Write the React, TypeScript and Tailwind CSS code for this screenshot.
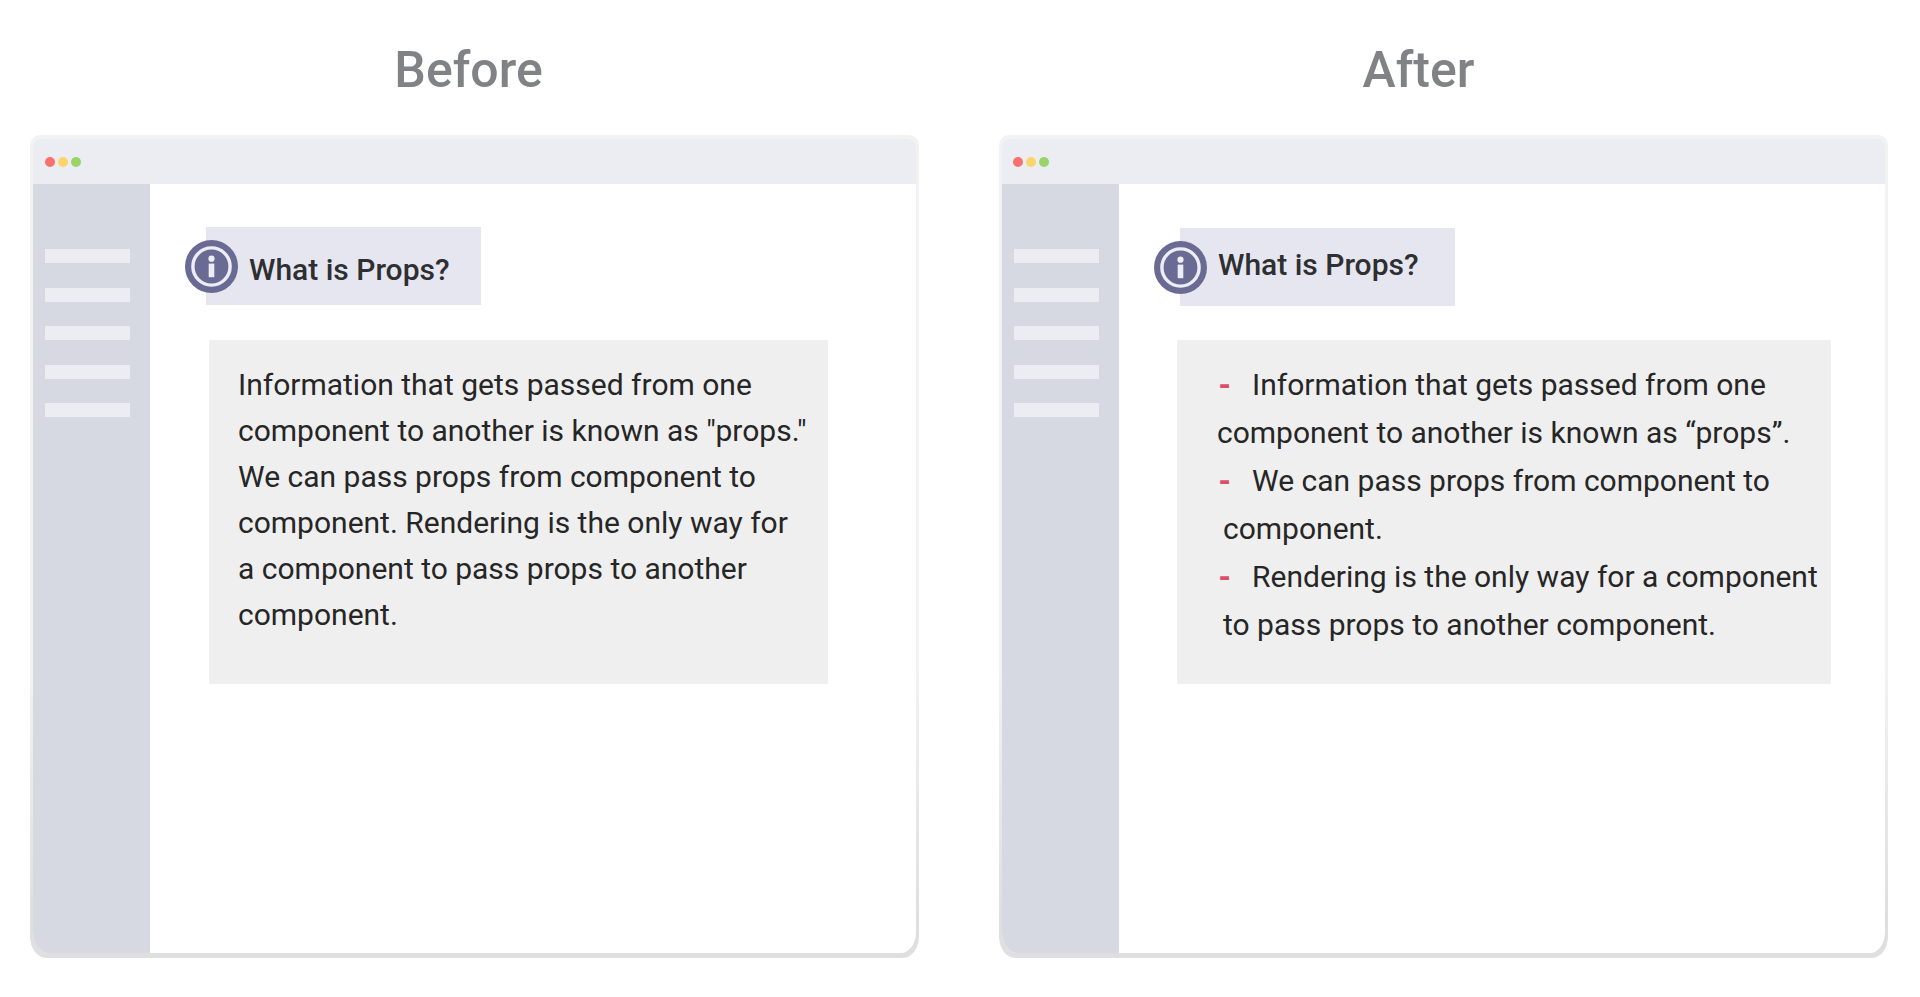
import type { ReactNode } from "react";
import clsx from "clsx";

function InfoIcon({ className }: { className?: string }) {
  return (
    <svg viewBox="0 0 53 53" className={clsx("size-[53px]", className)} aria-hidden="true">
      <circle cx="26.5" cy="26.5" r="26.5" fill="#6a6b95" />
      <circle cx="26.5" cy="26.5" r="18.6" fill="none" stroke="#ededf5" strokeWidth="3.4" />
      <circle cx="26.5" cy="18.7" r="3.1" fill="#ededf5" />
      <rect x="23.7" y="23.6" width="5.6" height="13.6" fill="#ededf5" />
    </svg>
  );
}

function Heading({ children, className }: { children: ReactNode; className: string }) {
  return (
    <h2 className={clsx("mb-[35px] text-center text-[50px] leading-[60px] font-medium text-[#808285]", className)}>
      {children}
    </h2>
  );
}

function BrowserWindow({ dotsClass, children }: { dotsClass: string; children: ReactNode }) {
  return (
    <div className="flex h-[823px] flex-col bg-linear-to-b from-[#f2f2f2] from-65% to-[#dfdfdf] to-95% px-[3px] pt-1 pb-[5px] [border-radius:10px_10px_16px_16px/10px_10px_22px_22px]">
      <div className="flex flex-1 flex-col overflow-hidden bg-white [border-radius:8px_8px_15px_15px/8px_8px_21px_21px]">
        <div className={clsx("flex h-[45px] items-center gap-[3px] bg-[#ecedf3]", dotsClass)}>
          <span className="size-[10px] rounded-full bg-[#f8716f]" />
          <span className="size-[10px] rounded-full bg-[#fbd56c]" />
          <span className="size-[10px] rounded-full bg-[#9ad467]" />
        </div>
        <div className="flex flex-1">
          <aside className="w-[117px] shrink-0 bg-[#d6d9e2] pt-[65px] pl-3">
            <div className="flex h-[168px] w-[85px] flex-col justify-between">
              <span className="h-[14px] bg-[#ecedf3]" />
              <span className="h-[14px] bg-[#ecedf3]" />
              <span className="h-[14px] bg-[#ecedf3]" />
              <span className="h-[14px] bg-[#ecedf3]" />
              <span className="h-[14px] bg-[#ecedf3]" />
            </div>
          </aside>
          <main className="flex-1 pt-[43px]">{children}</main>
        </div>
      </div>
    </div>
  );
}

function Dash() {
  return <span className="inline-block w-[35px] pl-px font-black text-[#d9506b]">-</span>;
}

export default function App() {
  return (
    <div className="grid min-h-screen grid-cols-2 gap-x-20 bg-white pt-10 pr-8 pb-[39px] pl-[30px] font-[Roboto,sans-serif] text-[#262626]">
      <section>
        <Heading className="pr-[12px]">Before</Heading>
        <BrowserWindow dotsClass="pl-[12px]">
          <div className="relative ml-[56px] h-[78px] w-[275px] bg-[#e6e6f0] pt-[26px] pl-[43px]">
            <InfoIcon className="absolute top-[13px] -left-[21px]" />
            <h3 className="text-[30px] leading-[34px] font-medium text-[#2e2f31]">What is Props?</h3>
          </div>
          <p className="mt-[35px] ml-[59px] h-[344px] w-[619px] bg-[#efefef] pt-[22px] pl-[29px] text-[30px] leading-[46px] whitespace-nowrap">
            Information that gets passed from one
            <br />
            component to another is known as "props."
            <br />
            We can pass props from component to
            <br />
            component. Rendering is the only way for
            <br />a component to pass props to another
            <br />
            component.
          </p>
        </BrowserWindow>
      </section>
      <section>
        <Heading className="pr-[50px]">After</Heading>
        <BrowserWindow dotsClass="pl-[11px]">
          <div className="relative mt-px ml-[61px] h-[78px] w-[275px] bg-[#e6e6f0] pt-[20px] pl-[38px]">
            <InfoIcon className="absolute top-[13px] -left-[26px]" />
            <h3 className="text-[30px] leading-[34px] font-medium text-[#2e2f31]">What is Props?</h3>
          </div>
          <ul className="mt-[34px] ml-[58px] h-[344px] w-[654px] bg-[#efefef] pt-[21px] pl-[40px] text-[30px] leading-[48px] whitespace-nowrap">
            <li>
              <Dash />
              Information that gets passed from one
              <br />
              component to another is known as “props”.
            </li>
            <li>
              <Dash />
              We can pass props from component to
              <span className="block pl-[6px]">component.</span>
            </li>
            <li>
              <Dash />
              Rendering is the only way for a component
              <span className="block pl-[6px]">to pass props to another component.</span>
            </li>
          </ul>
        </BrowserWindow>
      </section>
    </div>
  );
}
